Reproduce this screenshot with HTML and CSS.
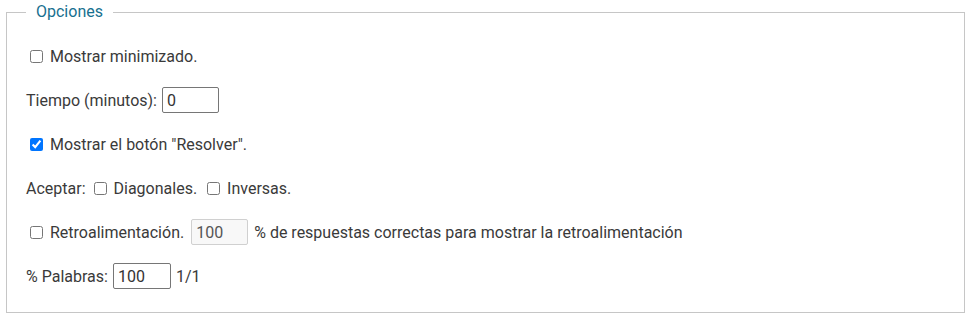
FILE: index.html
```html
<!DOCTYPE html>
<html lang="es">
<head>
<meta charset="utf-8">
<title>Opciones</title>
<link rel="stylesheet" href="styles.css">
</head>
<body>
<fieldset class="options">
  <legend class="options-title">Opciones</legend>
  <div class="row">
    <label class="check"><input type="checkbox" class="cb"><span>Mostrar minimizado.</span></label>
  </div>
  <div class="row">
    <label class="text" for="tiempo">Tiempo (minutos):</label>
    <input id="tiempo" class="field" type="text" value="0">
  </div>
  <div class="row">
    <label class="check"><input type="checkbox" class="cb" checked><span>Mostrar el botón "Resolver".</span></label>
  </div>
  <div class="row">
    <span class="text">Aceptar:</span>
    <label class="check inline"><input type="checkbox" class="cb"><span>Diagonales.</span></label>
    <label class="check inline"><input type="checkbox" class="cb"><span>Inversas.</span></label>
  </div>
  <div class="row">
    <label class="check"><input type="checkbox" class="cb"><span>Retroalimentación.</span></label>
    <input class="field disabled" type="text" value="100" disabled>
    <span class="text after">% de respuestas correctas para mostrar la retroalimentación</span>
  </div>
  <div class="row">
    <label class="text" for="palabras">% Palabras:</label>
    <input id="palabras" class="field wide" type="text" value="100">
    <span class="text count">1/1</span>
  </div>
</fieldset>
</body>
</html>
```
FILE: styles.css
```css
html, body {
  margin: 0;
  padding: 0;
  background: #ffffff;
}
body {
  padding: 0 6px;
  font-family: Roboto, "Noto Sans", sans-serif;
  font-size: 16px;
  color: #3a3a3a;
}
.options {
  margin: 0;
  border: 1px solid #c6c6c6;
  padding: 19px 19px 23px 19px;
  display: flex;
  flex-direction: column;
  gap: 18px;
  min-width: 0;
}
.options-title {
  padding: 0 10px;
  font-size: 16px;
  line-height: 24px;
  color: #17708f;
}
.row {
  display: flex;
  align-items: center;
  height: 26px;
  white-space: nowrap;
}
.check {
  display: flex;
  align-items: center;
}
.cb {
  margin: 0 7px 0 4px;
  width: 13px;
  height: 13px;
}
.check.inline {
  margin-left: 4px;
}
.check.inline + .check.inline {
  margin-left: 6px;
}
.field {
  box-sizing: border-box;
  width: 57px;
  height: 26px;
  margin: 0 0 0 5px;
  padding: 0 4px;
  border: 1px solid #767676;
  border-radius: 2px;
  font: inherit;
  color: #333333;
  background: #ffffff;
}
.field.wide {
  width: 58px;
}
.check + .field {
  margin-left: 7px;
}
.field.disabled {
  background: #f8f8f8;
  border-color: #d0d0d0;
  color: #555555;
}
.after {
  margin-left: 6px;
}
.count {
  margin-left: 5px;
}
```
